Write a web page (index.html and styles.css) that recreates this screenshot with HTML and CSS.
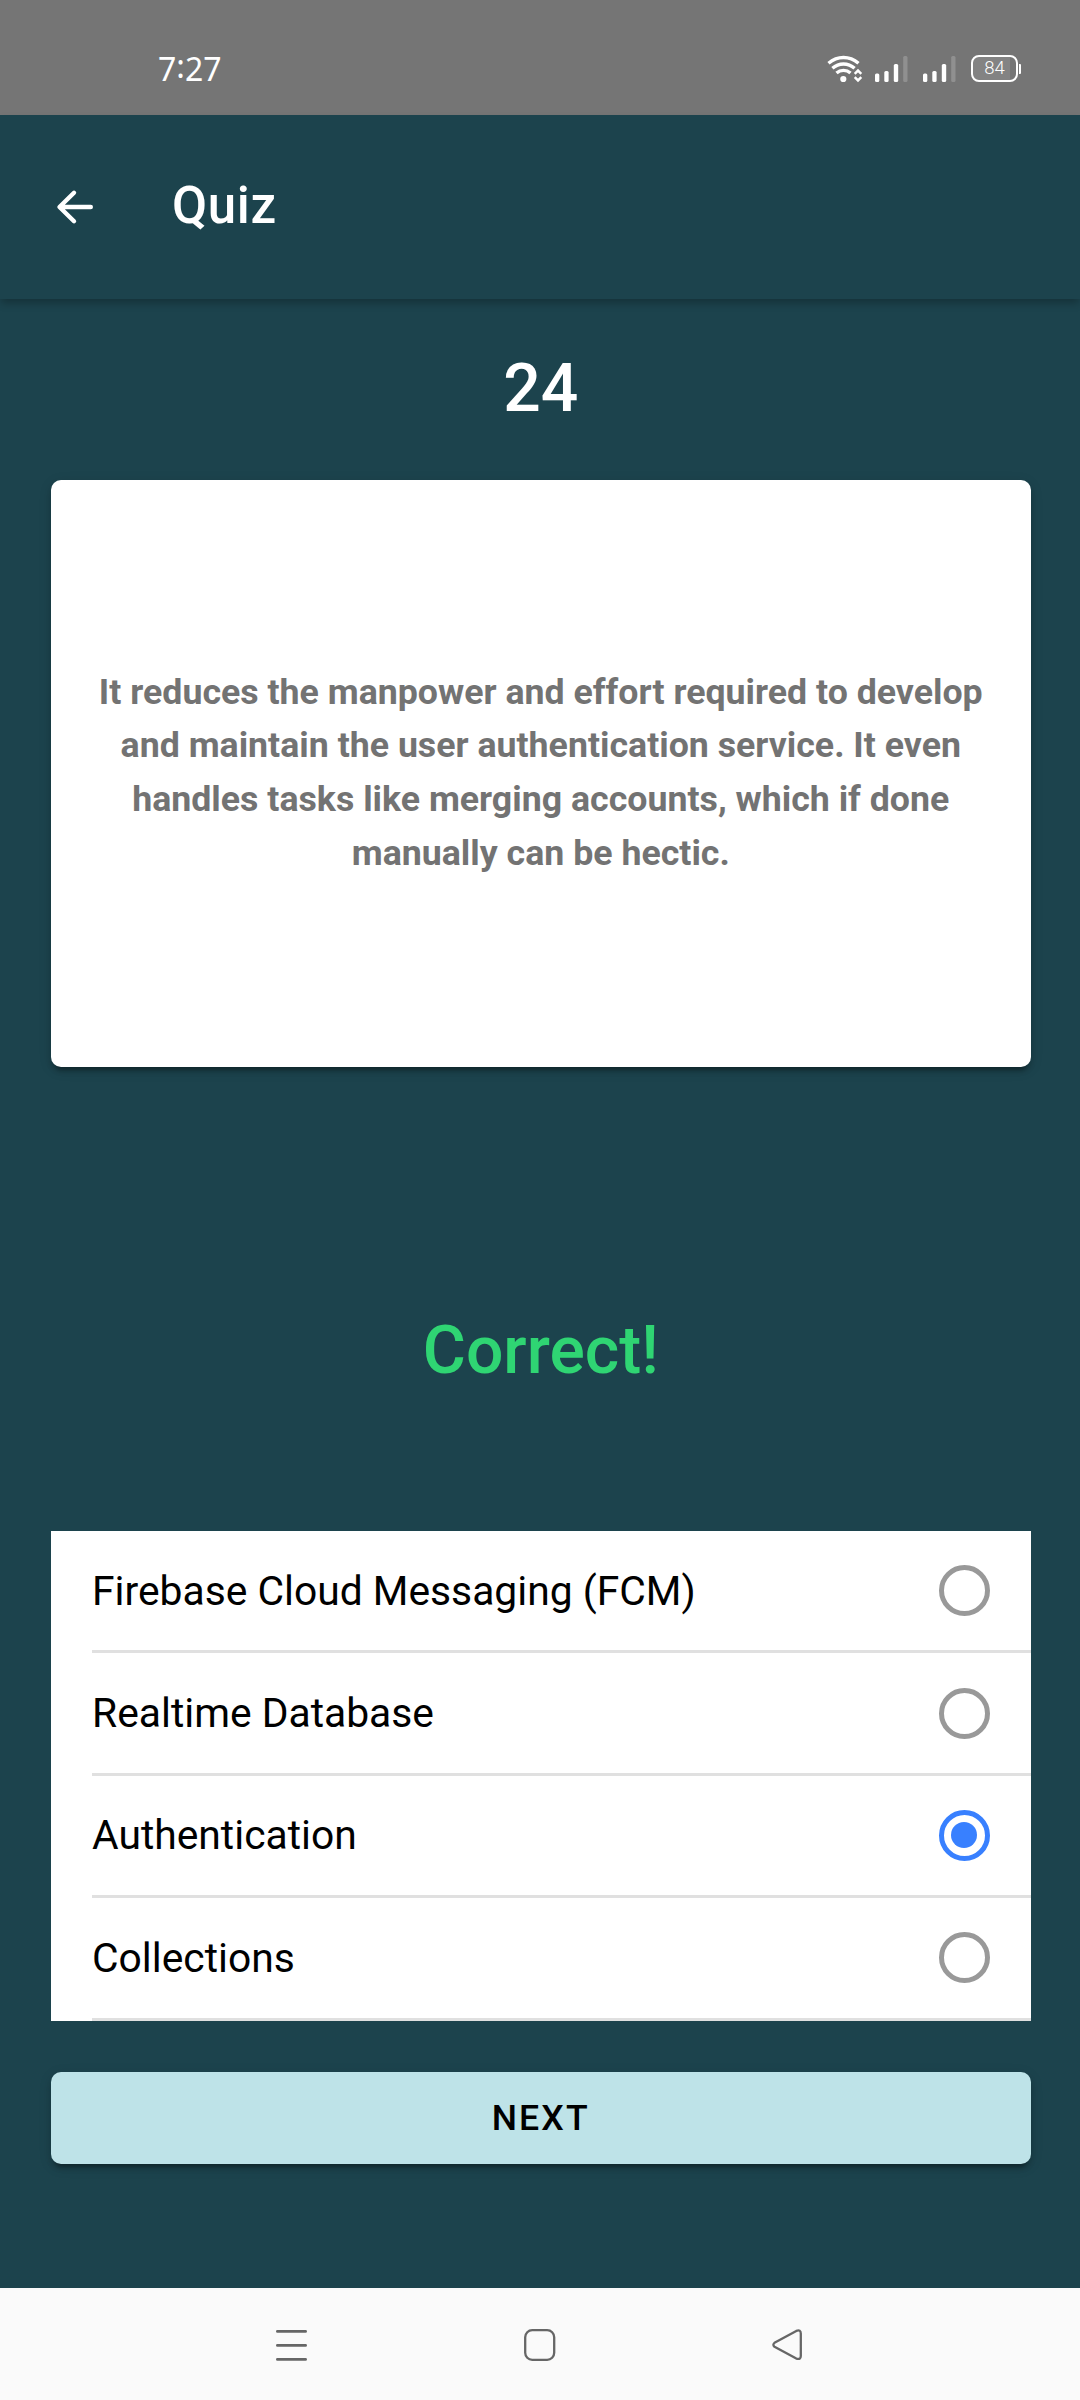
FILE: index.html
```html
<!DOCTYPE html>
<html lang="en">
<head>
<meta charset="utf-8">
<title>Quiz</title>
<link rel="stylesheet" href="styles.css">
</head>
<body>
<div class="screen">
  <div class="status-bar">
    <span class="clock">7<span class="colon">:</span>27</span>
    <div class="status-icons">
      <svg class="wifi" width="36" height="28" viewBox="0 0 36 28" fill="none" stroke="#fff" stroke-width="3.4">
        <path d="M1.5 8.2C10.500 .5 22.500 .5 31.500 8.200"/>
        <path d="M5.400 13.200C12 7.500 21 7.500 27.600 13.200"/>
        <path d="M9.500 18C13.500 14.500 19.500 14.500 23.500 18"/>
        <circle cx="16.300" cy="24" r="3.100" fill="#fff" stroke="none"/>
        <path d="M27.700 18.800L31 15.600L34.300 18.800M27.700 22.200L31 25.400L34.300 22.200" stroke-width="2.500"/>
      </svg>
      <svg class="signal" width="33" height="28" viewBox="0 0 33 28" fill="#fff">
        <rect x="0" y="18.500" width="4.300" height="8.500" rx="1.500"/>
        <rect x="9.300" y="16" width="4.300" height="11" rx="1.500"/>
        <rect x="18.800" y="9" width="4.400" height="18" rx="1.500"/>
        <rect x="28.200" y="1" width="4.300" height="26" rx="1.500" opacity=".2"/>
      </svg>
      <svg class="signal" width="33" height="28" viewBox="0 0 33 28" fill="#fff">
        <rect x="0" y="18.500" width="4.300" height="8.500" rx="1.500"/>
        <rect x="9.300" y="16" width="4.300" height="11" rx="1.500"/>
        <rect x="18.800" y="9" width="4.400" height="18" rx="1.500"/>
        <rect x="28.200" y="1" width="4.300" height="26" rx="1.500" opacity=".2"/>
      </svg>
      <div class="battery"><span class="battery-level">84</span></div>
      <span class="battery-tip"></span>
    </div>
  </div>

  <header class="toolbar">
    <svg class="back" width="38" height="36" viewBox="0 0 38 36" fill="none" stroke="#fff" stroke-width="4.400" stroke-linecap="round" stroke-linejoin="round">
      <path d="M18 3.800L3.500 18L18 32.200M4 18H34.800"/>
    </svg>
    <h1 class="title">Quiz</h1>
  </header>

  <main class="content">
    <div class="timer">24</div>
    <section class="card">
      <p class="question">It reduces the manpower and effort required to develop<br>and maintain the user authentication service. It even<br>handles tasks like merging accounts, which if done<br>manually can be hectic.</p>
    </section>
    <div class="result">Correct!</div>
    <div class="options">
      <div class="option"><div class="option-inner"><span>Firebase Cloud Messaging (FCM)</span><i class="radio"></i></div></div>
      <div class="option"><div class="option-inner"><span>Realtime Database</span><i class="radio"></i></div></div>
      <div class="option"><div class="option-inner"><span>Authentication</span><i class="radio checked"></i></div></div>
      <div class="option"><div class="option-inner"><span>Collections</span><i class="radio"></i></div></div>
    </div>
    <button class="next">NEXT</button>
  </main>

  <nav class="nav-bar">
    <svg width="32" height="32" viewBox="0 0 32 32" stroke="#666" stroke-width="2.800" stroke-linecap="round">
      <path d="M1.400 2.400H29.600M1.400 16.400H29.600M1.400 30.400H29.600"/>
    </svg>
    <svg width="32" height="32" viewBox="0 0 32 32" fill="none" stroke="#666" stroke-width="2.300">
      <rect x="1.200" y="1.200" width="29" height="29.600" rx="7"/>
    </svg>
    <svg width="32" height="32" viewBox="0 0 32 32" fill="none" stroke="#666" stroke-width="2.300" stroke-linejoin="round">
      <path d="M2.500 13.800L24.300 1.900Q28.800 .2 28.800 4.500V27Q28.800 31 24.300 29.600L2.500 17.800Q.2 15.800 2.500 13.800Z"/>
    </svg>
  </nav>
</div>
</body>
</html>
```
FILE: styles.css
```css
* { box-sizing: border-box; }
body { margin: 0; font-family: Roboto, sans-serif; }
.screen {
  width: 1080px;
  height: 2400px;
  display: flex;
  flex-direction: column;
  background: #1c434d;
  overflow: hidden;
}
.status-bar {
  height: 115px;
  flex: none;
  padding: 22px 59px 0 158px;
  display: flex;
  align-items: center;
  justify-content: space-between;
  background: #757575;
  color: #fff;
}
.clock { font: 32px/1 "Noto Sans", sans-serif; }
.colon { vertical-align: 3px; line-height: 0; }
.status-icons { display: flex; align-items: center; }
.wifi { margin-right: 12px; }
.signal { margin-right: 15px; }
.battery {
  width: 47px;
  height: 27px;
  border: 2.5px solid #fff;
  border-radius: 8px;
  display: flex;
  align-items: center;
  justify-content: center;
  background: linear-gradient(90deg, #838383 86%, transparent 86%);
}
.battery-level { font: 300 18.500px/1 Roboto, sans-serif; }
.battery-tip { width: 2px; height: 10px; margin-left: 1px; border-radius: 0 1px 1px 0; background: #fff; }
.toolbar {
  height: 184px;
  flex: none;
  padding-left: 56px;
  display: flex;
  align-items: center;
  color: #fff;
  box-shadow: 0 5px 8px -1px rgba(0, 0, 0, .26);
}
.title { margin: 0 0 2px 78px; font-size: 51px; font-weight: 500; line-height: 60px; letter-spacing: .64px; }
.content { flex: 1; padding: 0 49.500px 0 51px; display: flex; flex-direction: column; }
.timer { margin-top: 50px; height: 80px; line-height: 80px; text-align: center; font-size: 66px; font-weight: 500; color: #fff; }
.card {
  height: 587px;
  margin-top: 51px;
  display: flex;
  align-items: center;
  justify-content: center;
  background: #fff;
  border-radius: 10px;
  box-shadow: 0 8px 3px -5px rgba(0, 0, 0, .2), 0 5px 5px rgba(0, 0, 0, .14), 0 3px 13px rgba(0, 0, 0, .12);
}
.question {
  margin: 0 0 1px;
  font-size: 35.710px;
  font-weight: 700;
  line-height: 53.600px;
  text-align: center;
  white-space: nowrap;
  color: #737373;
}
.result { margin-top: 244px; height: 80px; line-height: 80px; text-align: center; font-size: 66px; font-weight: 500; color: #2fd573; }
.options { margin-top: 140px; height: 490px; background: #fff; overflow: hidden; }
.option { padding-left: 41px; }
.option-inner {
  height: 122.400px;
  padding-right: 41px;
  display: flex;
  align-items: center;
  justify-content: space-between;
  border-bottom: 3px solid #e0e0e0;
  font-size: 40.800px;
  color: #000;
}
.radio {
  width: 51px;
  height: 51px;
  border: 5px solid #999;
  border-radius: 50%;
  display: flex;
  align-items: center;
  justify-content: center;
}
.radio.checked { border-color: #3880ff; }
.radio.checked::after { content: ""; width: 26px; height: 26px; border-radius: 50%; background: #3880ff; }
.next {
  height: 92px;
  margin-top: 51px;
  padding: 0;
  border: 0;
  border-radius: 10px;
  background: #bee3e8;
  color: #000;
  font: 500 35.640px/90px Roboto, sans-serif;
  letter-spacing: 2.140px;
  box-shadow: 0 8px 3px -5px rgba(0, 0, 0, .2), 0 5px 5px rgba(0, 0, 0, .14), 0 3px 13px rgba(0, 0, 0, .12);
}
.nav-bar {
  height: 112px;
  flex: none;
  padding: 1px 276px 0 276px;
  display: flex;
  align-items: center;
  justify-content: space-between;
  background: #fafafa;
}
```
